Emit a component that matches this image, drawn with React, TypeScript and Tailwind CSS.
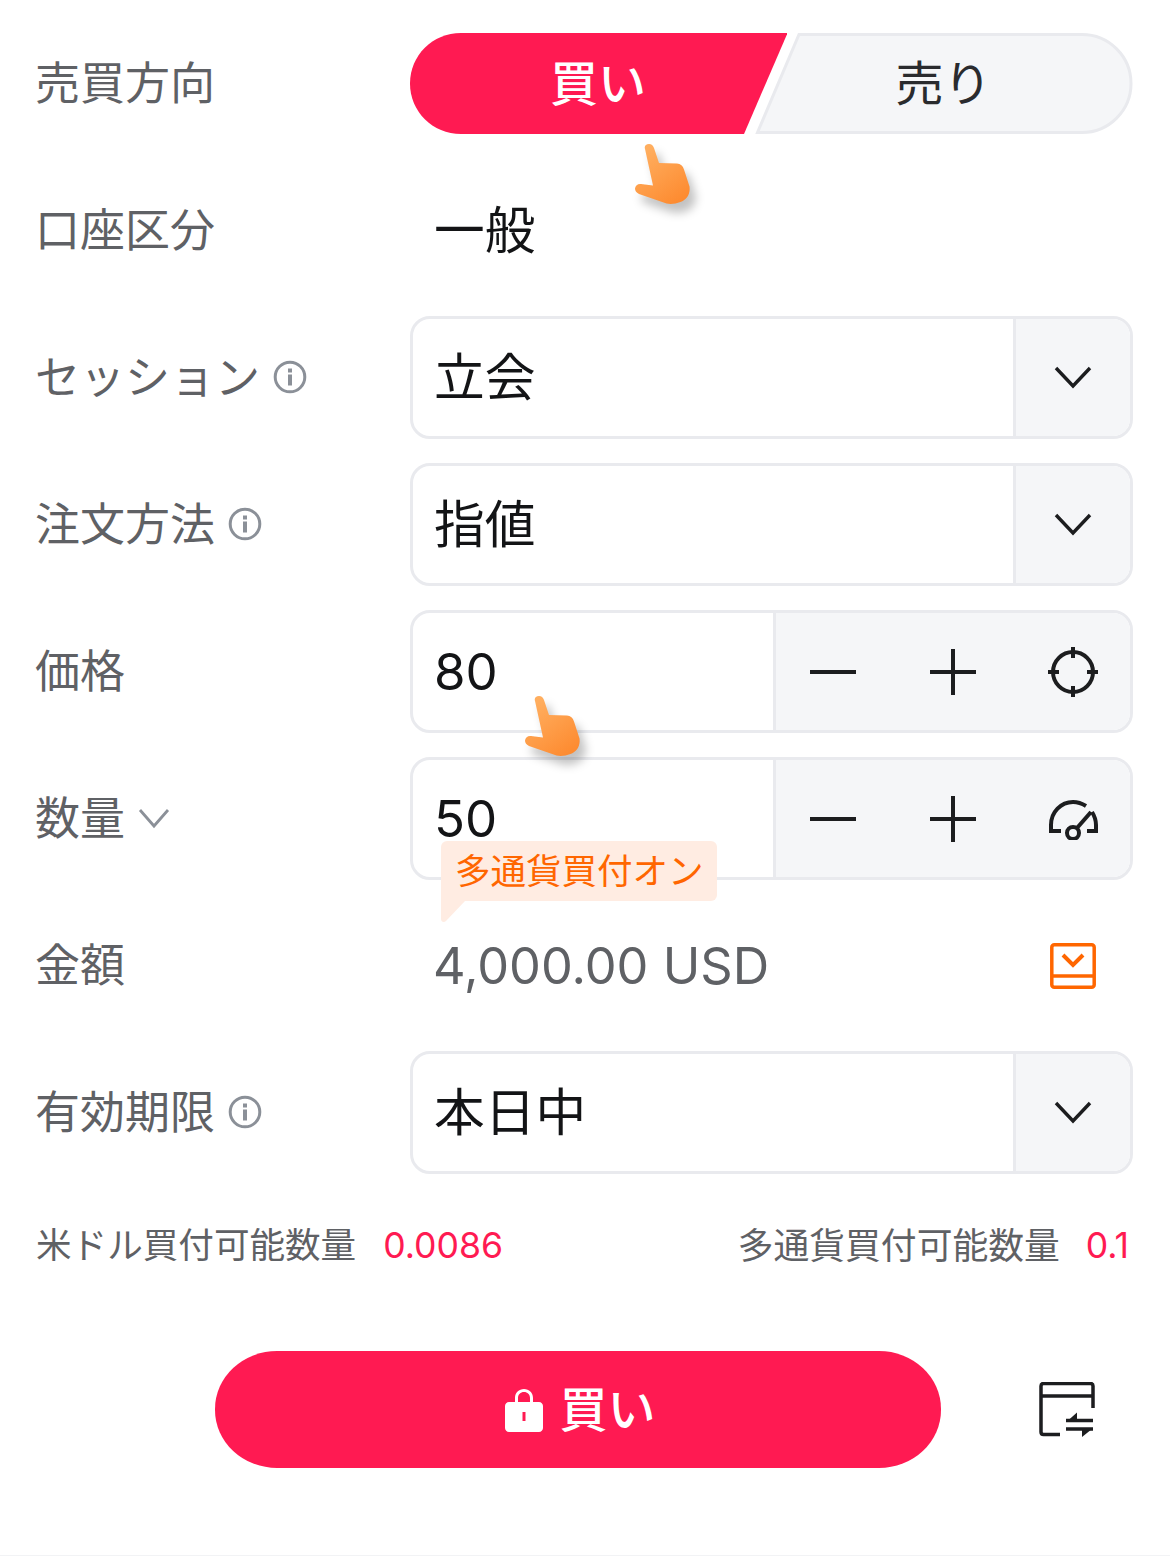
const JP = "font-['Inter','Noto_Sans_CJK_JP',sans-serif]";

function Chevron() {
  return (
    <svg width="38" height="24" viewBox="0 0 38 24" fill="none" stroke="#1c1d1f" strokeWidth="3.4" className="mb-[2px]">
      <path d="M2 3l17 18L36 3" />
    </svg>
  );
}

function Info() {
  return (
    <svg width="34" height="34" viewBox="0 0 34 34" fill="none" className="shrink-0">
      <circle cx="17" cy="17" r="14.8" stroke="#8b9098" strokeWidth="3" />
      <rect x="15" y="8.5" width="4" height="4" fill="#8b9098" />
      <rect x="15" y="14.5" width="4" height="11" fill="#8b9098" />
    </svg>
  );
}

function Hand({ className }: { className: string }) {
  return (
    <svg width="56" height="62" viewBox="0 0 56 62" className={`${className} overflow-visible drop-shadow-[6px_9px_5px_rgba(0,0,0,0.24)]`}>
      <defs>
        <linearGradient id="hand" x1="0.2" y1="0.1" x2="0.8" y2="1">
          <stop offset="0" stopColor="#ffae5f" />
          <stop offset="1" stopColor="#fd8a2f" />
        </linearGradient>
      </defs>
      <path
        fill="url(#hand)"
        d="M10 5c-1-3 1-5 4-5 2.500 0 4 1.500 5 4l5 15 18 .5c3.500.2 6 2.500 7 6l5.500 17c1 8-3 13-9 15.500-5 2-10 2.500-14 1.500L4 50c-3-1.500-4-3.500-4-5.500.3-3 3-5 6-4.500l12 1.500L10 5z"
      />
    </svg>
  );
}

function Field({ label, info, chevron, children }: { label: string; info?: boolean; chevron?: boolean; children: React.ReactNode }) {
  return (
    <div className="flex h-[123px] items-center">
      <div className="mb-[1px] flex w-[374px] items-center gap-[13px] text-[45px] leading-none text-[#5f6165]">
        <span className="-ml-[1px]">{label}</span>
        {info && <Info />}
        {chevron && (
          <svg width="32" height="22" viewBox="0 0 32 22" fill="none" stroke="#8b9098" strokeWidth="2.800">
            <path d="M2 3l14 16L30 3" />
          </svg>
        )}
      </div>
      <div className="min-w-0 flex-1">{children}</div>
    </div>
  );
}

function Select({ value }: { value: string }) {
  return (
    <div className="flex h-[123px] overflow-hidden rounded-[20px] border-[3px] border-[#e9eaee] bg-white">
      <div className="flex flex-1 items-center pl-[21px] pt-[2px] text-[50.700px] leading-none text-[#131416]">{value}</div>
      <div className="flex w-[117px] items-center justify-center border-l-[3px] border-[#e9eaee] bg-[#f5f6f8]">
        <Chevron />
      </div>
    </div>
  );
}

function Stepper({ value, icon, children }: { value: string; icon: React.ReactNode; children?: React.ReactNode }) {
  return (
    <div className="relative">
      <div className="flex h-[123px] overflow-hidden rounded-[20px] border-[3px] border-[#e9eaee] bg-white">
        <div className="flex flex-1 items-center pl-[21px] text-[51px] leading-none text-[#131416]">{value}</div>
        <div className="flex w-[357px] items-center border-l-[3px] border-[#e9eaee] bg-[#f5f6f8] pl-[33px]">
          <svg width="48" height="48" viewBox="0 0 48 48" stroke="#1c1d1f" strokeWidth="4">
            <path d="M1 24h46" />
          </svg>
          <svg width="48" height="48" viewBox="0 0 48 48" stroke="#1c1d1f" strokeWidth="4" className="ml-[72px]">
            <path d="M1 24h46M24 1v46" />
          </svg>
          <div className="ml-[71px] flex">{icon}</div>
        </div>
      </div>
      {children}
    </div>
  );
}

export default function App() {
  return (
    <div className={`${JP} relative h-[1556px] w-[1170px] overflow-hidden border-b border-[#f2f3f5] bg-white pl-[36px] pr-[37px] pt-[22px]`}>
      <div className="flex flex-col gap-[24px]">
        <Field label="売買方向">
          <div className="relative flex h-[101px] text-[48px] leading-none">
            <svg width="377" height="101" viewBox="0 0 377 101" className="absolute left-0 top-0">
              <path fill="#ff1a52" d="M51 0H377.500L334 101H51C22.500 101 0 78.500 0 50.500S22.500 0 51 0z" />
            </svg>
            <svg width="378" height="101" viewBox="0 0 378 101" className="absolute right-0 top-0">
              <path
                fill="#f5f6f8"
                stroke="#e9eaee"
                strokeWidth="3"
                d="M44 1.500H327c27 0 49 22 49 49s-22 49-49 49H2.500L44 1.500z"
              />
            </svg>
            <div className="relative flex w-[376px] items-center justify-center font-medium text-white">買い</div>
            <div className="relative flex flex-1 items-center justify-center pr-[32px] text-[#2a2b2e]">売り</div>
          </div>
        </Field>
        <Field label="口座区分">
          <div className="pl-[24px] pt-[2px] text-[50.700px] leading-none text-[#131416]">一般</div>
        </Field>
        <Field label="セッション" info>
          <Select value="立会" />
        </Field>
        <Field label="注文方法" info>
          <Select value="指値" />
        </Field>
        <Field label="価格">
          <Stepper
            value="80"
            icon={
              <svg width="50" height="50" viewBox="0 0 50 50" fill="none" stroke="#1c1d1f" strokeWidth="4">
                <circle cx="25" cy="25" r="20" />
                <path d="M25 0v11M25 39v11M0 25h11M39 25h11" />
              </svg>
            }
          />
        </Field>
        <Field label="数量" chevron>
          <Stepper
            value="50"
            icon={
              <svg width="50" height="42" viewBox="0 0 50 42" fill="none" stroke="#1c1d1f" strokeWidth="4">
                <path d="M13 33H3v-6C3 14 13 4 25 4c5 0 9 1.500 13 4M44 14c2.500 4 4 8 4 13v6h-9" />
                <circle cx="25" cy="35" r="6" />
                <path d="M29 30l14-16" />
              </svg>
            }
          >
            <div className="absolute left-[31px] top-[84px]">
              <div className="whitespace-nowrap rounded-[6px] rounded-bl-none bg-[#ffece2] pb-[6px] pl-[14px] pr-[13px] pt-[8px] text-[35.500px] leading-[46px] text-[#ff6600]">
                多通貨買付オン
              </div>
              <svg width="24" height="22" viewBox="0 0 24 22" className="block">
                <path fill="#ffece2" d="M0 0h24L5 20c-2 2-5 1-5-2V0z" />
              </svg>
            </div>
          </Stepper>
        </Field>
        <Field label="金額">
          <div className="flex items-center pl-[23px] pr-[37px]">
            <span className="flex-1 pt-[2px] text-[50.500px] leading-none text-[#5f6165]">4,000.00 USD</span>
            <svg width="46" height="46" viewBox="0 0 46 46" fill="none" stroke="#ff6600" strokeWidth="3.500">
              <rect x="1.800" y="1.800" width="42.400" height="42.400" rx="2.500" />
              <path d="M2 33h42" />
              <path d="M13 12l10 10 10-10" strokeWidth="4" />
            </svg>
          </div>
        </Field>
        <Field label="有効期限" info>
          <Select value="本日中" />
        </Field>
      </div>

      <div className="mt-[49px] flex items-center justify-between text-[35.600px] leading-[46px] text-[#5f6165]">
        <div className="flex gap-[27px]">
          <span>米ドル買付可能数量</span>
          <span className="text-[#ff1a52]">0.0086</span>
        </div>
        <div className="flex gap-[26px] pr-[4px]">
          <span className="text-[35.800px]">多通貨買付可能数量</span>
          <span className="text-[#ff1a52]">0.1</span>
        </div>
      </div>

      <div className="mt-[82px] flex items-center pl-[179px]">
        <div className="flex h-[117px] w-[726px] items-center justify-center gap-[16px] rounded-[62px/58px] bg-[#ff1a52] pl-[5px] text-[48px] font-medium leading-none text-white">
          <svg width="38" height="44" viewBox="0 0 38 44">
            <path
              fill="#fff"
              fillRule="evenodd"
              d="M10 14V10C10 4.500 14 1 19 1s9 3.500 9 9v4h6c2.200 0 4 1.800 4 4v22c0 2.200-1.800 4-4 4H4c-2.200 0-4-1.800-4-4V18c0-2.200 1.800-4 4-4h6zm3 0h12V10c0-3.500-2.500-6-6-6s-6 2.500-6 6v4zm4.500 10v9h3v-9h-3z"
            />
          </svg>
          <span>買い</span>
        </div>
        <svg width="56" height="56" viewBox="0 0 56 56" fill="none" stroke="#1c1d1f" strokeWidth="3.500" className="ml-[98px]">
          <path d="M54 26V4c0-1.500-1-2.500-2.500-2.500H4.500C3 1.500 2 2.500 2 4v46c0 1.500 1 2.500 2.500 2.500H21M2 14h52" />
          <path d="M27 38.500h27M27 47h27" />
          <path fill="#1c1d1f" stroke="none" d="M38 30.500v8h-9zM43 55v-8h10z" />
        </svg>
      </div>

      <Hand className="absolute left-[635px] top-[144px]" />
      <Hand className="absolute left-[525px] top-[696px]" />
    </div>
  );
}
